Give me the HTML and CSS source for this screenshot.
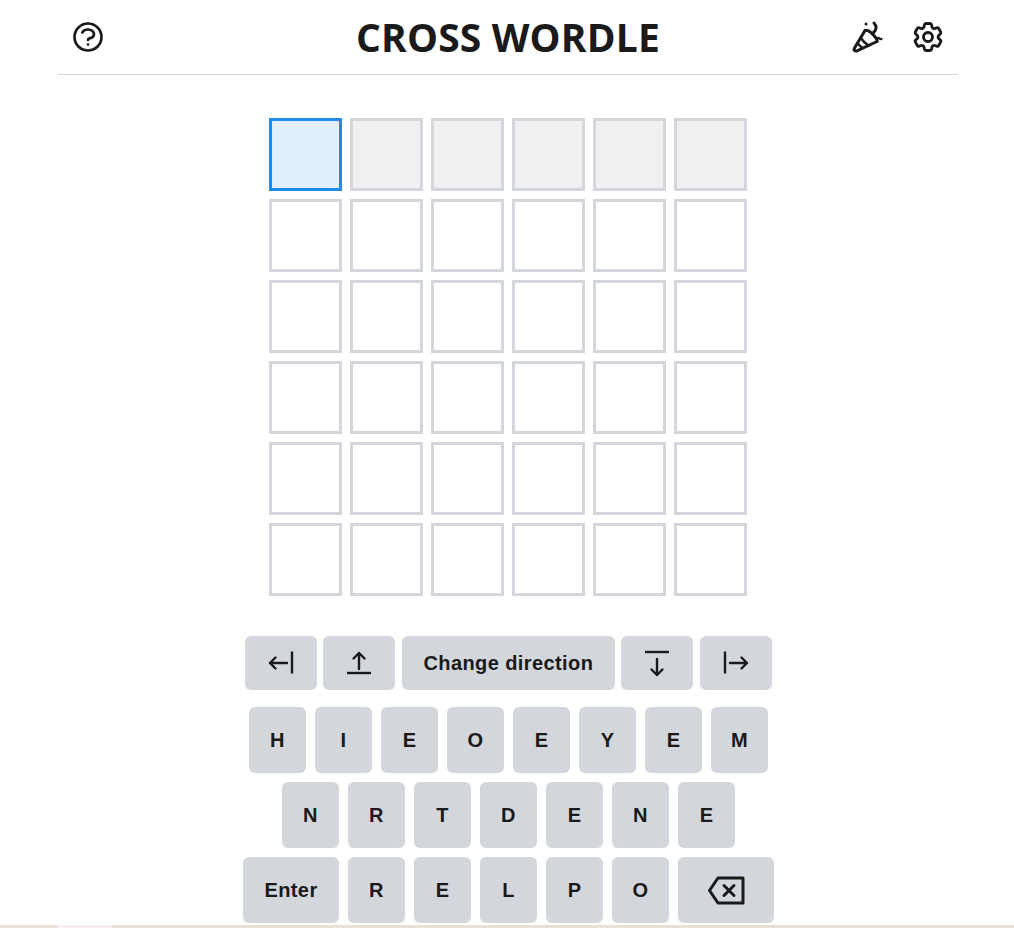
FILE: index.html
```html
<!DOCTYPE html>
<html lang="en">
<head>
    <meta charset="UTF-8">
    <meta name="viewport" content="width=device-width, initial-scale=1.0">
    <title>Cross Wordle</title>
    <link rel="stylesheet" href="styles.css">
</head>
<body>
    <div class="app">
        <header class="top-bar">
            <div class="top-left">
                <svg class="top-icon" viewBox="0 0 24 24" fill="none" stroke="currentColor" stroke-width="1.800" stroke-linecap="round" stroke-linejoin="round">
                    <path d="M8.228 9c.549-1.165 2.03-2 3.772-2 2.21 0 4 1.343 4 3 0 1.4-1.278 2.575-3.006 2.907-.542.104-.994.54-.994 1.093m0 3h.01"/>
                    <path d="M21 12a9 9 0 11-18 0 9 9 0 0118 0z"/>
                </svg>
            </div>
            <h1 class="title">CROSS WORDLE</h1>
            <div class="top-right">
                <svg class="top-icon" viewBox="0 0 36 36" fill="none" stroke="currentColor" stroke-width="3" stroke-linecap="round" stroke-linejoin="round">
                    <path d="M15 11.500 4.500 29c-1.200 2 .5 3.700 2.500 2.800L27 22.500"/>
                    <path d="M15 11.500c1.500-1 5 .5 8 4s5 5.500 4 7"/>
                    <path d="M10.500 18.500c2 3.200 4.500 5.700 8 8" stroke-width="2.400"/>
                    <path d="M7.500 24c1.500 2 3 3.500 5 5" stroke-width="2.400"/>
                    <path d="M16 5h.01"/>
                    <path d="M24 4c2.500 2.500 3.200 6.500-.5 9.500"/>
                    <path d="M26.500 20.500c.5-1.500 2-2 3-1 .5.500 1.200.8 2 .5" stroke-width="2.200"/>
                </svg>
                <svg class="top-icon" viewBox="0 0 24 24" fill="none" stroke="currentColor" stroke-width="1.900" stroke-linecap="round" stroke-linejoin="round">
                    <path d="M9.594 3.94c.09-.542.56-.94 1.11-.94h2.593c.55 0 1.02.398 1.11.94l.213 1.281c.063.374.313.686.645.87.074.04.147.083.22.127.325.196.72.257 1.075.124l1.217-.456a1.125 1.125 0 0 1 1.37.49l1.296 2.247a1.125 1.125 0 0 1-.26 1.431l-1.003.827c-.293.241-.438.613-.43.992a7.723 7.723 0 0 1 0 .255c-.008.378.137.75.43.991l1.004.827c.424.35.534.955.26 1.43l-1.298 2.247a1.125 1.125 0 0 1-1.369.491l-1.217-.456c-.355-.133-.75-.072-1.076.124a6.47 6.47 0 0 1-.22.128c-.331.183-.581.495-.644.869l-.213 1.281c-.09.543-.56.94-1.11.94h-2.594c-.55 0-1.019-.398-1.11-.94l-.213-1.281c-.062-.374-.312-.686-.644-.87a6.52 6.52 0 0 1-.22-.127c-.325-.196-.72-.257-1.076-.124l-1.217.456a1.125 1.125 0 0 1-1.369-.49l-1.297-2.247a1.125 1.125 0 0 1 .26-1.431l1.004-.827c.292-.24.437-.613.43-.991a6.932 6.932 0 0 1 0-.255c.007-.38-.138-.751-.43-.992l-1.004-.827a1.125 1.125 0 0 1-.26-1.43l1.297-2.247a1.125 1.125 0 0 1 1.37-.491l1.216.456c.356.133.751.072 1.076-.124.072-.044.146-.086.22-.128.332-.183.582-.495.644-.869l.214-1.28Z"/>
                    <path d="M15 12a3 3 0 11-6 0 3 3 0 016 0z"/>
                </svg>
            </div>
        </header>

        <div class="board">
            <div class="cell cell-active"></div>
            <div class="cell cell-word"></div>
            <div class="cell cell-word"></div>
            <div class="cell cell-word"></div>
            <div class="cell cell-word"></div>
            <div class="cell cell-word"></div>

            <div class="cell"></div>
            <div class="cell"></div>
            <div class="cell"></div>
            <div class="cell"></div>
            <div class="cell"></div>
            <div class="cell"></div>

            <div class="cell"></div>
            <div class="cell"></div>
            <div class="cell"></div>
            <div class="cell"></div>
            <div class="cell"></div>
            <div class="cell"></div>

            <div class="cell"></div>
            <div class="cell"></div>
            <div class="cell"></div>
            <div class="cell"></div>
            <div class="cell"></div>
            <div class="cell"></div>

            <div class="cell"></div>
            <div class="cell"></div>
            <div class="cell"></div>
            <div class="cell"></div>
            <div class="cell"></div>
            <div class="cell"></div>

            <div class="cell"></div>
            <div class="cell"></div>
            <div class="cell"></div>
            <div class="cell"></div>
            <div class="cell"></div>
            <div class="cell"></div>
        </div>

        <div class="nav-keys">
            <button class="key nav-key" type="button">
                <svg class="nav-icon" viewBox="0 0 28 28" fill="none" stroke="currentColor" stroke-width="2.400" stroke-linecap="round" stroke-linejoin="round">
                    <path d="M20 14H3M8.500 8.500 3 14l5.500 5.500"/>
                    <path d="M25 2.500v22" stroke-linecap="butt"/>
                </svg>
            </button>
            <button class="key nav-key" type="button">
                <svg class="nav-icon" viewBox="0 0 28 28" fill="none" stroke="currentColor" stroke-width="2.400" stroke-linecap="round" stroke-linejoin="round">
                    <path d="M14 20V4M8.500 9.500 14 4l5.500 5.500"/>
                    <path d="M2 24h24" stroke-linecap="butt"/>
                </svg>
            </button>
            <button class="key change-key" type="button">Change direction</button>
            <button class="key nav-key" type="button">
                <svg class="nav-icon" viewBox="0 0 28 28" fill="none" stroke="currentColor" stroke-width="2.400" stroke-linecap="round" stroke-linejoin="round">
                    <path d="M14 10v16M8.500 20.500 14 26l5.500-5.500"/>
                    <path d="M2 3h24" stroke-linecap="butt"/>
                </svg>
            </button>
            <button class="key nav-key" type="button">
                <svg class="nav-icon" viewBox="0 0 28 28" fill="none" stroke="currentColor" stroke-width="2.400" stroke-linecap="round" stroke-linejoin="round">
                    <path d="M8 14h17M19.500 8.500 25 14l-5.500 5.500"/>
                    <path d="M3 2.500v22" stroke-linecap="butt"/>
                </svg>
            </button>
        </div>

        <div class="letter-keys">
            <div class="key-row">
                <button class="key letter-key" type="button">H</button>
                <button class="key letter-key" type="button">I</button>
                <button class="key letter-key" type="button">E</button>
                <button class="key letter-key" type="button">O</button>
                <button class="key letter-key" type="button">E</button>
                <button class="key letter-key" type="button">Y</button>
                <button class="key letter-key" type="button">E</button>
                <button class="key letter-key" type="button">M</button>
            </div>
            <div class="key-row">
                <button class="key letter-key" type="button">N</button>
                <button class="key letter-key" type="button">R</button>
                <button class="key letter-key" type="button">T</button>
                <button class="key letter-key" type="button">D</button>
                <button class="key letter-key" type="button">E</button>
                <button class="key letter-key" type="button">N</button>
                <button class="key letter-key" type="button">E</button>
            </div>
            <div class="key-row">
                <button class="key wide-key" type="button">Enter</button>
                <button class="key letter-key" type="button">R</button>
                <button class="key letter-key" type="button">E</button>
                <button class="key letter-key" type="button">L</button>
                <button class="key letter-key" type="button">P</button>
                <button class="key letter-key" type="button">O</button>
                <button class="key wide-key" type="button">
                    <svg class="back-icon" viewBox="0 0 40 32" fill="none" stroke="currentColor" stroke-width="3" stroke-linecap="round" stroke-linejoin="round">
                        <path d="M3.500 16.500 12 4h25v25H12z"/>
                        <path d="M18 11.500l10 10M28 11.500l-10 10"/>
                    </svg>
                </button>
            </div>
        </div>
    </div>

    <div class="page-edge">
        <div class="edge-left"></div>
        <div class="edge-light"></div>
        <div class="edge-rest"></div>
    </div>
</body>
</html>
```

FILE: styles.css
```css
html, body {
    margin: 0;
    padding: 0;
    background-color: #fff;
    overflow: hidden;
}

body {
    font-family: "Liberation Sans", Arial, sans-serif;
    color: #1a1a1a;
}

.app {
    width: 900px;
    margin-left: 58px;
}

.top-bar {
    display: grid;
    grid-template-columns: 1fr auto 1fr;
    align-items: center;
    height: 74px;
    padding: 0 12px;
    border-bottom: 1px solid #d9d9dc;
}

.top-left {
    display: flex;
    margin-top: -1px;
}

.top-right {
    display: flex;
    justify-content: flex-end;
    gap: 24px;
    margin-top: -1px;
}

.top-icon {
    display: block;
    width: 36px;
    height: 36px;
}

.title {
    margin: 0;
    font-family: "Open Sans", sans-serif;
    font-size: 39px;
    font-weight: 700;
    letter-spacing: 0.15px;
    line-height: 40px;
}

.board {
    display: grid;
    grid-template-columns: repeat(6, 73px);
    grid-auto-rows: 73px;
    gap: 8px;
    justify-content: center;
    margin-top: 43px;
}

.cell {
    box-sizing: border-box;
    border: 3px solid #d3d6da;
    background-color: #fff;
}

.cell-word {
    background-color: #f0f0f1;
}

.cell-active {
    border-color: #2189e8;
    background-color: #e1effa;
}

.key {
    display: flex;
    align-items: center;
    justify-content: center;
    padding: 0;
    border: none;
    border-radius: 6px;
    background-color: #d3d6da;
    color: #1a1a1a;
    font-family: "Liberation Sans", Arial, sans-serif;
    font-size: 20px;
    font-weight: 700;
    letter-spacing: 0.4px;
    cursor: pointer;
}

.nav-keys {
    display: flex;
    justify-content: center;
    gap: 6.5px;
    width: 900.8px;
    margin-top: 40px;
}

.nav-key {
    width: 72px;
    height: 54px;
}

.change-key {
    width: 213px;
    height: 54px;
}

.nav-icon {
    width: 28px;
    height: 28px;
}

.letter-keys {
    display: flex;
    flex-direction: column;
    gap: 9px;
    width: 901px;
    margin-top: 17px;
}

.key-row {
    display: flex;
    justify-content: center;
    gap: 9px;
}

.letter-key {
    width: 57px;
    height: 66px;
}

.wide-key {
    width: 96px;
    height: 66px;
}

.back-icon {
    width: 40px;
    height: 32px;
}

.page-edge {
    display: flex;
    height: 3px;
    margin-top: 2px;
}

.edge-left {
    width: 57px;
    background-color: #ebe1dc;
}

.edge-light {
    width: 55px;
    background-color: #f6f1ef;
}

.edge-rest {
    flex: 1;
    background-color: #ebe0d8;
}
```
